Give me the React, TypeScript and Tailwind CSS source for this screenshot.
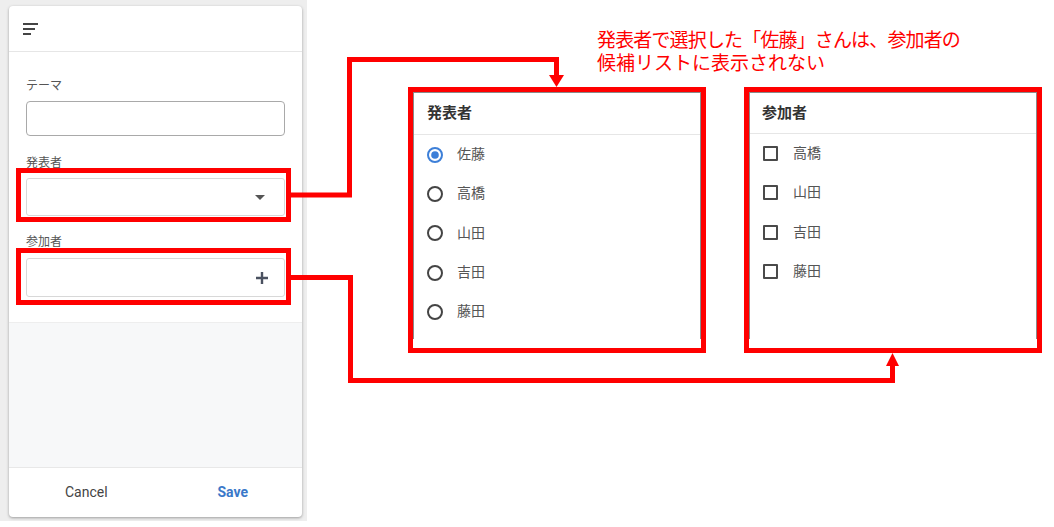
import React from "react";

const jp = { fontFamily: '"Roboto", "Noto Sans CJK JP", sans-serif' };

function Radio({ checked }: { checked?: boolean }) {
  return (
    <svg width="16" height="16" viewBox="0 0 16 16" className="shrink-0">
      {checked ? (
        <>
          <circle cx="8" cy="8" r="7" fill="none" stroke="#3d7fd8" strokeWidth="2" />
          <circle cx="8" cy="8" r="3.8" fill="#3d7fd8" />
        </>
      ) : (
        <circle cx="8" cy="8" r="7" fill="none" stroke="#444" strokeWidth="2" />
      )}
    </svg>
  );
}

function Check() {
  return <div className="w-[15px] h-[15px] border-2 border-[#4a4a4a] rounded-[1px] shrink-0" />;
}

export default function App() {
  const presenters = ["佐藤", "高橋", "山田", "吉田", "藤田"];
  const participants = ["高橋", "山田", "吉田", "藤田"];
  return (
    <div className="relative w-[1054px] h-[527px] bg-white flex overflow-hidden" style={jp}>
      {/* Left gray container */}
      <div className="w-[307px] h-[521px] bg-[#eeeeee] pl-[9px] pt-[6px] pr-[5px] pb-[4px] shrink-0">
        <div className="w-[293px] h-[511px] bg-white rounded-[4px] shadow-[0_1px_3px_rgba(0,0,0,0.35)] flex flex-col overflow-hidden">
          <div className="h-[46px] border-b border-[#e6e6e6] flex items-center pl-[14px] shrink-0">
            <svg width="16" height="12" viewBox="0 0 16 12">
              <rect x="0" y="0" width="15" height="2" fill="#444" />
              <rect x="0" y="5" width="12" height="2" fill="#444" />
              <rect x="0" y="10" width="8" height="2" fill="#444" />
            </svg>
          </div>
          <div className="px-[17px] pt-[26px] pb-[25px] flex flex-col shrink-0">
            <div className="text-[12px] leading-[16px] text-[#555] mb-[7px]">テーマ</div>
            <div className="h-[35px] border border-[#a9a9a9] rounded-[4px]" />
            <div className="text-[12px] leading-[16px] text-[#555] mt-[19px] mb-[7px]">発表者</div>
            <div className="h-[38px] border border-[#d8d8d8] rounded-[3px] flex items-center justify-end pr-[19px]">
              <svg width="10" height="5" viewBox="0 0 10 5">
                <path d="M0 0 L10 0 L5 5 Z" fill="#555" />
              </svg>
            </div>
            <div className="text-[12px] leading-[16px] text-[#555] mt-[18px] mb-[8px]">参加者</div>
            <div className="h-[39px] border border-[#d8d8d8] rounded-[3px] flex items-center justify-end pr-[15px]">
              <svg width="14" height="14" viewBox="0 0 14 14">
                <path d="M7 1 V13 M1 7 H13" stroke="#4a5160" strokeWidth="2.4" />
              </svg>
            </div>
          </div>
          <div className="flex-1 bg-[#f7f8f9] border-t border-[#eeeeee]" />
          <div className="h-[50px] flex items-center border-t border-[#e8e8e8] shrink-0">
            <div className="flex-1 text-center pl-2 text-[14px] text-[#444]">Cancel</div>
            <div className="flex-1 text-center pl-2 text-[14px] font-bold text-[#3a78c9]">Save</div>
          </div>
        </div>
      </div>

      {/* Right annotation area */}
      <div className="flex-1 flex flex-col">
        <div
          className="ml-[290px] mt-[27px] text-[19px] leading-[23px] text-[#ff0000]"
          style={{ fontFamily: '"Noto Sans CJK JP", sans-serif' }}
        >
          <div className="tracking-[-0.85px] whitespace-nowrap">発表者で選択した「佐藤」さんは、参加者の</div>
          <div className="whitespace-nowrap">候補リストに表示されない</div>
        </div>
        <div className="flex mt-[14px]">
          <div className="ml-[101px] w-[298px] h-[266px] border-[5px] border-[#ff0000] bg-white flex flex-col">
            <div className="flex-1 border-l border-r border-t border-[#8a8a8a] flex flex-col">
              <div className="h-[42px] border-b border-[#e6e6e6] flex items-center pl-[13px] text-[15px] font-bold text-[#333]">
                発表者
              </div>
              {presenters.map((n, i) => (
                <div key={n} className="h-[39.3px] flex items-center pl-[13px] gap-[14px]">
                  <Radio checked={i === 0} />
                  <span className="text-[14px] text-[#555]">{n}</span>
                </div>
              ))}
            </div>
            <div className="h-[9px]" />
          </div>
          <div className="ml-[38px] w-[298px] h-[266px] border-[5px] border-[#ff0000] bg-white flex flex-col">
            <div className="flex-1 border-l border-r border-t border-[#8a8a8a] flex flex-col">
              <div className="h-[41px] border-b border-[#e6e6e6] flex items-center pl-[12px] text-[15px] font-bold text-[#333]">
                参加者
              </div>
              {participants.map((n) => (
                <div key={n} className="h-[39.3px] flex items-center pl-[13px] gap-[15px]">
                  <Check />
                  <span className="text-[14px] text-[#555]">{n}</span>
                </div>
              ))}
            </div>
            <div className="h-[9px]" />
          </div>
        </div>
      </div>

      {/* Annotation overlay: highlight boxes and connectors */}
      <svg className="absolute inset-0 pointer-events-none" width="1054" height="527" viewBox="0 0 1054 527">
        <g fill="none" stroke="#ff0000" strokeWidth="5" strokeLinejoin="miter">
          <rect x="18.5" y="170.5" width="270" height="49" />
          <rect x="18.5" y="250.5" width="270" height="52" />
          <polyline points="291,195 349.5,195 349.5,59.5 556.5,59.5 556.5,77" />
          <polyline points="291,277.5 350.5,277.5 350.5,380.5 892.5,380.5 892.5,365" />
        </g>
        <polygon points="549,75 564,75 556.5,87" fill="#ff0000" />
        <polygon points="886,366 899,366 892.5,353" fill="#ff0000" />
      </svg>
    </div>
  );
}
